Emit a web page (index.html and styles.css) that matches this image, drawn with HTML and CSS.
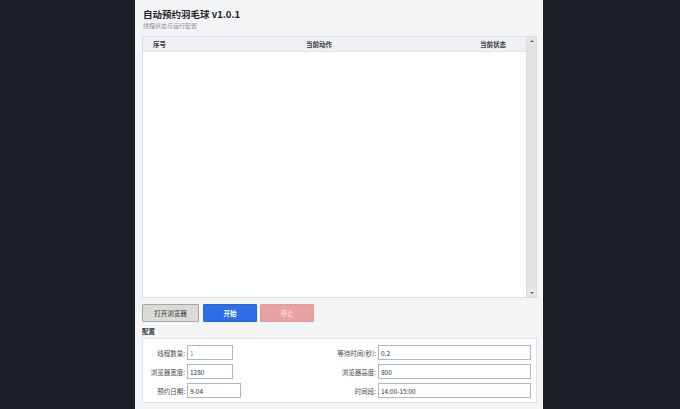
FILE: index.html
```html
<!DOCTYPE html>
<html lang="zh-CN">
<head>
<meta charset="utf-8">
<title>自动预约羽毛球</title>
<link rel="stylesheet" href="styles.css">
</head>
<body>
<div class="panel">
  <div class="title">自动预约羽毛球 v1.0.1</div>
  <div class="subtitle">线程状态与运行配置</div>
  <div class="table">
    <div class="table-main">
      <div class="thead">
        <div class="th c1">序号</div>
        <div class="th c2">当前动作</div>
        <div class="th c3">当前状态</div>
      </div>
      <div class="tbody"></div>
    </div>
    <div class="scrollbar">
      <div class="sb-btn"><span class="arrow up"></span></div>
      <div class="sb-track"></div>
      <div class="sb-btn"><span class="arrow down"></span></div>
    </div>
  </div>
  <div class="buttons">
    <button class="btn btn-open">打开浏览器</button>
    <button class="btn btn-start">开始</button>
    <button class="btn btn-stop">停止</button>
  </div>
  <div class="section-label">配置</div>
  <div class="config">
    <label class="lbl">线程数量:</label>
    <div class="cell"><input class="inp w45 muted" value="1"></div>
    <label class="lbl">等待时间(秒):</label>
    <div class="cell"><input class="inp wfull" value="0.2"></div>

    <label class="lbl">浏览器宽度:</label>
    <div class="cell"><input class="inp w45" value="1280"></div>
    <label class="lbl">浏览器高度:</label>
    <div class="cell"><input class="inp wfull" value="800"></div>

    <label class="lbl">预约日期:</label>
    <div class="cell"><input class="inp w53" value="9-04"></div>
    <label class="lbl">时间段:</label>
    <div class="cell"><input class="inp wfull" value="14:00-15:00"></div>
  </div>
</div>
</body>
</html>
```

FILE: styles.css
```css
html, body {
  margin: 0;
  padding: 0;
}
body {
  background: #1b1f26;
  width: 680px;
  height: 409px;
  overflow: hidden;
  font-family: "Noto Sans CJK SC", "Noto Sans", sans-serif;
}
.panel {
  margin-left: 135px;
  width: 408px;
  height: 409px;
  box-sizing: border-box;
  background: #f3f4f6;
  padding: 8px 6px 0 7px;
  display: flex;
  flex-direction: column;
}
.title {
  font-size: 9.5px;
  line-height: 13px;
  font-weight: 700;
  color: #1f2329;
  padding-left: 1px;
}
.subtitle {
  margin-top: 1px;
  font-size: 6px;
  line-height: 7px;
  color: #8a8f98;
  padding-left: 1px;
}
.table {
  margin-top: 7px;
  height: 262px;
  box-sizing: border-box;
  border: 1px solid #d9dce1;
  background: #ffffff;
  display: flex;
}
.table-main {
  flex: 1;
  display: flex;
  flex-direction: column;
}
.thead {
  height: 14px;
  background: #eef0f4;
  border-bottom: 1px solid #e3e6ea;
  display: grid;
  grid-template-columns: 35px 282px 1fr;
  align-items: center;
  font-size: 6.5px;
  color: #333840;
  font-weight: 600;
}
.th.c1 { padding-left: 10px; }
.th.c2, .th.c3 { text-align: center; }
.tbody {
  flex: 1;
  background: #ffffff;
}
.scrollbar {
  width: 9px;
  display: flex;
  flex-direction: column;
  background: #e6e6e4;
  border-left: 1px solid #dcdcdc;
}
.sb-btn {
  height: 8px;
  display: flex;
  align-items: center;
  justify-content: center;
}
.sb-track {
  flex: 1;
  background: #e3e3e1;
}
.arrow {
  width: 0;
  height: 0;
  border-left: 2px solid transparent;
  border-right: 2px solid transparent;
}
.arrow.up { border-bottom: 2px solid #606060; }
.arrow.down { border-top: 2px solid #606060; }
.buttons {
  margin-top: 6px;
  display: flex;
  gap: 3px;
}
.btn {
  height: 18px;
  box-sizing: border-box;
  padding: 0;
  font-family: inherit;
  font-size: 6.5px;
  border-radius: 1px;
  cursor: pointer;
}
.btn-open {
  width: 57px;
  background: #dcdad6;
  border: 1px solid #a6a6a6;
  color: #333;
}
.btn-start {
  width: 54px;
  margin-left: 1px;
  background: #2e6fe8;
  border: 1px solid #2a62cf;
  color: #ffffff;
  font-weight: 600;
}
.btn-stop {
  width: 54px;
  background: #e9a2a4;
  border: 1px solid #e59a9c;
  color: #fbeaea;
}
.section-label {
  margin-top: 5px;
  font-size: 6.5px;
  line-height: 8px;
  color: #2b2f36;
  font-weight: 600;
}
.config {
  margin-top: 3px;
  border: 1px solid #dfe2e7;
  background: #ffffff;
  padding: 6px 5px 4px 0;
  display: grid;
  grid-template-columns: 42px 1fr 48px 153px;
  column-gap: 2px;
  row-gap: 4px;
  align-items: center;
}
.lbl {
  text-align: right;
  font-size: 6.5px;
  color: #444a52;
  white-space: nowrap;
}
.cell {
  display: flex;
}
.inp {
  height: 15px;
  box-sizing: border-box;
  border: 1px solid #a9b7d1;
  background: #ffffff;
  padding: 0 2px;
  font-family: inherit;
  font-size: 6.5px;
  color: #333;
  outline: none;
  border-radius: 0;
}
.inp.muted { color: #8a8a8a; }
.w45 { width: 46px; }
.w53 { width: 54px; }
.wfull { width: 153px; }
```
